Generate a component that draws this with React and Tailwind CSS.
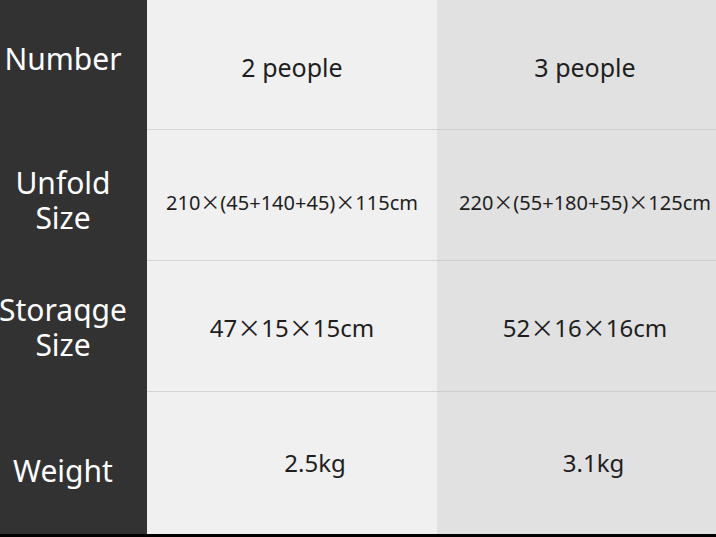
const ROWS = [
  { label: ['Number'], a: '2 people', b: '3 people', size: 'text-[25px]', h: 'h-[130px]', pad: 'pt-[6px]', lpad: 'pb-[14px]' },
  { label: ['Unfold', 'Size'], a: '210×(45+140+45)×115cm', b: '220×(55+180+55)×125cm', size: 'text-[20px]', h: 'h-[131px]', pad: 'pt-[15px]', lpad: 'pt-[8px]' },
  { label: ['Storaqge', 'Size'], a: '47×15×15cm', b: '52×16×16cm', size: 'text-[24px]', h: 'h-[131px]', pad: 'pt-[3px]', lpad: '' },
  { label: ['Weight'], a: '2.5kg', b: '3.1kg', size: 'text-[24px]', h: 'h-[142px]', pad: '', lpad: 'pt-[14px]', last: true },
];

function Dims({ text }) {
  const parts = text.split('×');
  return (
    <>
      {parts.map((p, i) => (
        <span key={i}>
          {i > 0 && <span className="font-['Noto_Sans_CJK_SC',sans-serif]">×</span>}
          {p}
        </span>
      ))}
    </>
  );
}

export default function App() {
  return (
    <div className="w-[716px] h-[537px] overflow-hidden bg-black font-['Noto_Sans',sans-serif]">
      <div className="grid grid-cols-[147px_290px_279px]">
        {ROWS.map((row, i) => (
          <div key={i} className="contents">
            <div
              className={`${row.h} ${row.lpad} bg-[#323232] text-white text-[30px] leading-[35px] flex flex-col items-center justify-center pr-[21px]`}
            >
              {row.label.map((l) => (
                <span key={l} className="whitespace-nowrap">{l}</span>
              ))}
            </div>
            <div
              className={`${row.h} ${row.pad} bg-[#f0f0f0] text-[#1e1e1e] ${row.size} flex items-center justify-center whitespace-nowrap ${
                row.last ? 'pl-[46px]' : 'border-b border-[#d4d4d4]'
              }`}
            >
              <Dims text={row.a} />
            </div>
            <div
              className={`${row.h} ${row.pad} bg-[#e1e1e1] text-[#1e1e1e] ${row.size} flex items-center justify-center whitespace-nowrap ${
                row.last ? 'pl-[34px]' : 'pl-[17px] border-b border-[#cdcdcd]'
              }`}
            >
              <Dims text={row.b} />
            </div>
          </div>
        ))}
      </div>
    </div>
  );
}
